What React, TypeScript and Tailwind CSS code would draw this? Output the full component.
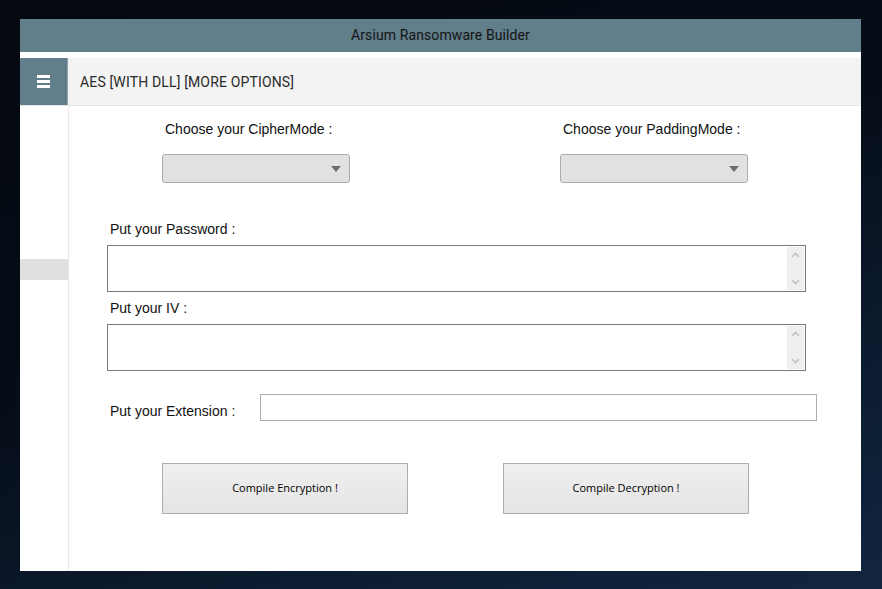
import React from 'react';

function Combo() {
  return (
    <div className="mt-[17px] flex h-[29px] w-[188px] items-center justify-end rounded-[3px] border border-[#adadad] bg-[#e1e1e1] pr-[8px]">
      <svg width="10" height="6" viewBox="0 0 10 6">
        <path d="M0 0 L10 0 L5 6 Z" fill="#6e6e6e" />
      </svg>
    </div>
  );
}

function TextBox() {
  return (
    <div className="mt-[8px] ml-[38px] flex h-[47px] w-[699px] justify-end border border-[#7a7a7a] bg-white p-[1px]">
      <div className="flex w-[17px] flex-col items-center justify-between bg-[#efefef] py-[5px]">
        <svg width="9" height="6" viewBox="0 0 9 6">
          <path d="M1 5 L4.5 1.5 L8 5" fill="none" stroke="#c2c2c2" strokeWidth="1.6" />
        </svg>
        <svg width="9" height="6" viewBox="0 0 9 6">
          <path d="M1 1 L4.5 4.5 L8 1" fill="none" stroke="#c2c2c2" strokeWidth="1.6" />
        </svg>
      </div>
    </div>
  );
}

function Btn({ label }: { label: string }) {
  return (
    <button className="flex h-[51px] w-[246px] items-center justify-center border border-[#adadad] bg-gradient-to-b from-[#f0f0f0] to-[#e4e4e4] font-['Open_Sans',sans-serif] text-[11px] text-[#000]">
      {label}
    </button>
  );
}

export default function App() {
  const label = "font-['Liberation_Sans',Arial,sans-serif] text-[14px] leading-[16px] text-[#111]";
  return (
    <div className="h-[589px] w-[882px] overflow-hidden bg-[linear-gradient(160deg,#04080f_0%,#060d18_45%,#0c1c30_75%,#122640_100%)] pl-[20px] pt-[19px]">
      <div className="flex h-[552px] w-[841px] flex-col bg-white">
        <div className="flex h-[33px] items-center justify-center bg-[#617e8b] font-['Roboto',sans-serif] text-[14px] tracking-[0.1px] text-[#141414]">
          Arsium Ransomware Builder
        </div>
        <div className="h-[6px]" />
        <div className="flex h-[48px] items-stretch border-b border-[#e6e6e6] bg-[#f3f3f3]">
          <div className="flex w-[48px] flex-col items-center justify-center gap-[2.5px] border-r border-[#8fa3ad] bg-[#617e8b]">
            <div className="h-[2.5px] w-[13px] bg-white" />
            <div className="h-[2.5px] w-[13px] bg-white" />
            <div className="h-[2.5px] w-[13px] bg-white" />
          </div>
          <div className="flex items-center pl-[12px] pt-[1px] font-['Roboto',sans-serif] text-[14px] tracking-[0.15px] text-[#2a2a2a]">
            AES [WITH DLL] [MORE OPTIONS]
          </div>
        </div>
        <div className="flex flex-1">
          <div className="w-[49px] border-r border-[#e8e8e8]">
            <div className="mt-[153px] h-[21px] w-[48px] bg-[#e0e0e0]" />
          </div>
          <div className="flex flex-1 flex-col pt-[15px]">
            <div className="flex gap-[210px] pl-[93px]">
              <div className="w-[188px]">
                <div className={`${label} pl-[3px]`}>Choose your CipherMode :</div>
                <Combo />
              </div>
              <div className="w-[188px]">
                <div className={`${label} pl-[3px] whitespace-nowrap`}>Choose your PaddingMode :</div>
                <Combo />
              </div>
            </div>
            <div className={`${label} mt-[38px] pl-[41px]`}>Put your Password :</div>
            <TextBox />
            <div className={`${label} mt-[8px] pl-[41px]`}>Put your IV :</div>
            <TextBox />
            <div className="mt-[23px] flex items-start pl-[41px]">
              <div className={`${label} w-[150px] pt-[9px]`}>Put your Extension :</div>
              <div className="h-[27px] w-[557px] border border-[#adadad] bg-white" />
            </div>
            <div className="mt-[42px] flex gap-[95px] pl-[93px]">
              <Btn label="Compile Encryption !" />
              <Btn label="Compile Decryption !" />
            </div>
          </div>
        </div>
      </div>
    </div>
  );
}
